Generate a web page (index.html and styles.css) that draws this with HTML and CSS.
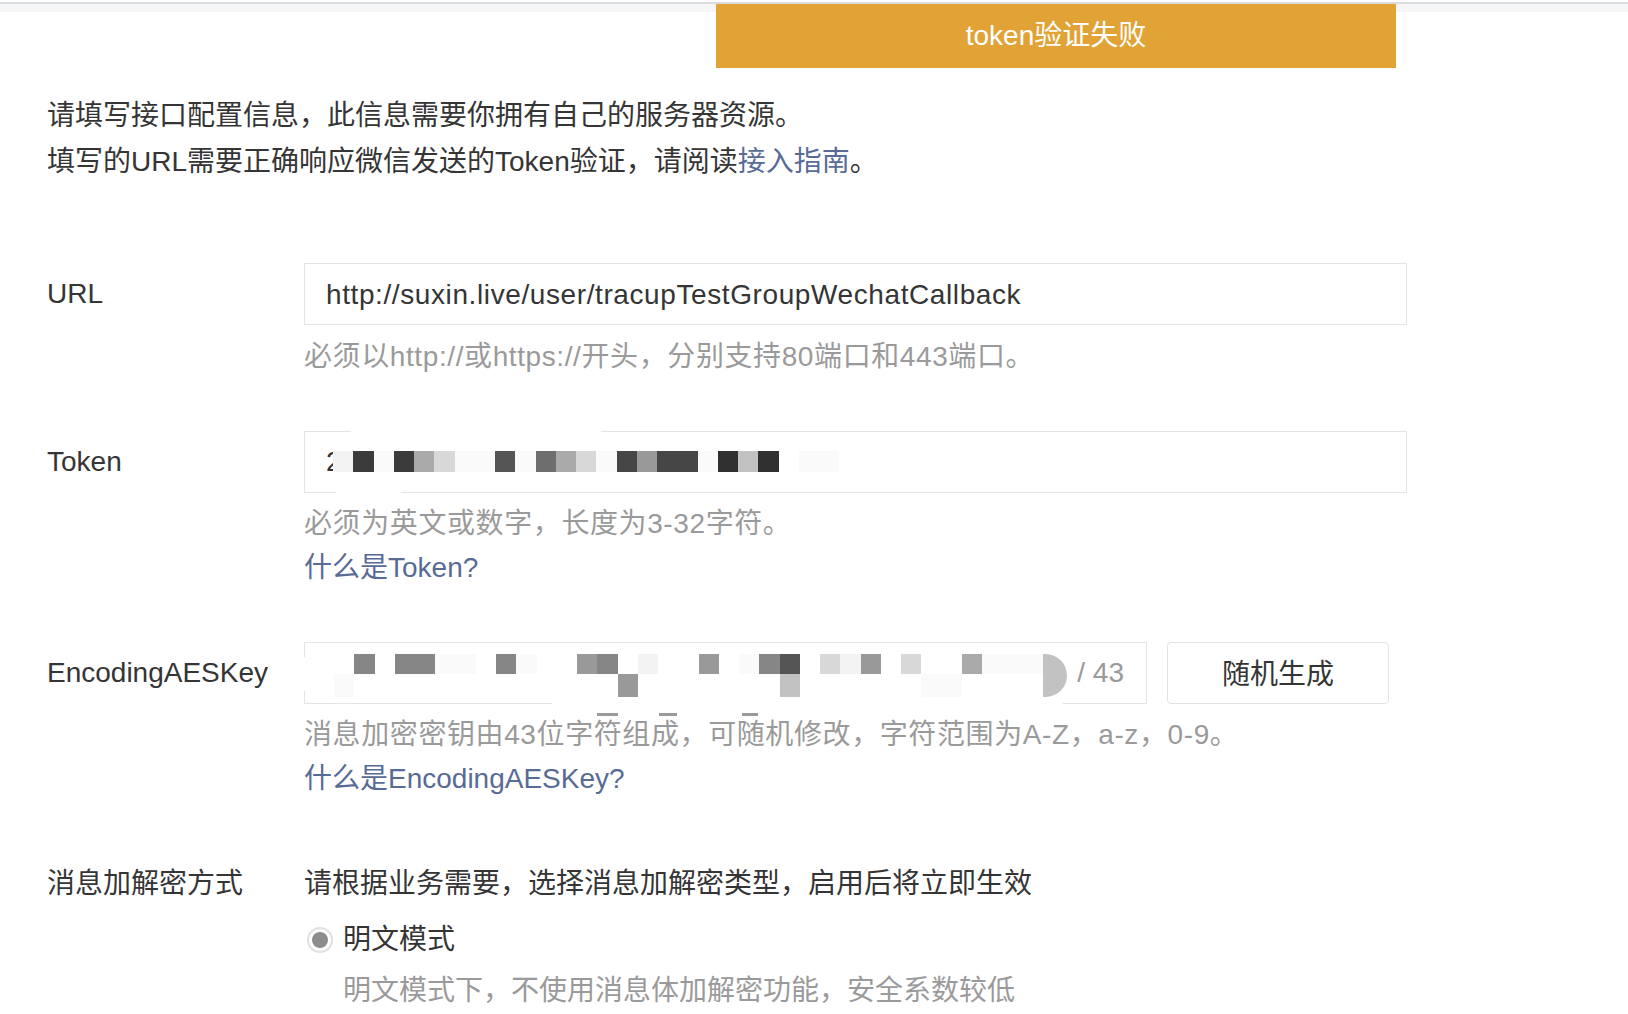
FILE: index.html
```html
<!DOCTYPE html>
<html lang="zh-CN">
<head>
    <meta charset="UTF-8">
    <meta name="viewport" content="width=device-width, initial-scale=1.0">
    <title>服务器配置</title>
    <link rel="stylesheet" href="styles.css">
</head>

<body>
    <div class="topbar"></div>
    <div class="toast">token验证失败</div>

    <div class="page">
        <div class="intro">
            <p>请填写接口配置信息，此信息需要你拥有自己的服务器资源。</p>
            <p>填写的URL需要正确响应微信发送的Token验证，请阅读<a href="#">接入指南</a>。</p>
        </div>

        <div class="field field-url">
            <label class="field-label">URL</label>
            <div class="field-body">
                <div class="input">
                    <span class="value">http://suxin.live/user/tracupTestGroupWechatCallback</span>
                </div>
                <p class="tips">必须以http://或https://开头，分别支持80端口和443端口。</p>
            </div>
        </div>

        <div class="field field-token">
            <label class="field-label">Token</label>
            <div class="field-body">
                <div class="input input-token">
                    <span class="cut">2</span>
                    <div class="mosaic-token">
                        <i class="k11"></i><i class="k2"></i><i class="k12"></i><i class="k2"></i><i class="k8"></i>
                        <i class="k10"></i><i class="k12"></i><i class="k12"></i><i class="k4"></i><i class="k12"></i>
                        <i class="k5"></i><i class="k8"></i><i class="k10"></i><i class="k12"></i><i class="k3"></i>
                        <i class="k7"></i><i class="k3"></i><i class="k3"></i><i class="k12"></i><i class="k1"></i>
                        <i class="k9"></i><i class="k1"></i><i></i><i class="k12"></i><i class="k12"></i>
                    </div>
                    <span class="smudge smudge-token-top"></span>
                    <span class="smudge smudge-token-bottom"></span>
                </div>
                <p class="tips">必须为英文或数字，长度为3-32字符。</p>
                <a class="help" href="#">什么是Token?</a>
            </div>
        </div>

        <div class="field field-aes">
            <label class="field-label">EncodingAESKey</label>
            <div class="field-body">
                <div class="input-row">
                    <div class="input input-aes">
                        <div class="mosaic-aes">
                            <i></i><i class="k6"></i><i></i><i class="k6"></i><i class="k6"></i><i class="k12"></i>
                            <i class="k12"></i><i></i><i class="k6"></i><i class="k12"></i><i></i><i></i>
                            <i class="k7"></i><i class="k6"></i><i></i><i class="k11"></i><i></i><i></i>
                            <i class="k7"></i><i></i><i class="k12"></i><i class="k6"></i><i class="k4"></i><i></i>
                            <i class="k10"></i><i class="k11"></i><i class="k7"></i><i></i><i class="k10"></i><i></i>
                            <i></i><i class="k8"></i><i class="k12"></i><i class="k12"></i><i class="k12"></i><i class="k9 edge"></i>

                            <i class="k12"></i><i></i><i></i><i></i><i></i><i></i>
                            <i></i><i></i><i></i><i></i><i></i><i></i>
                            <i></i><i></i><i class="k7"></i><i></i><i></i><i></i>
                            <i></i><i></i><i></i><i></i><i class="k9"></i><i></i>
                            <i></i><i></i><i></i><i></i><i></i><i class="k12"></i>
                            <i class="k12"></i><i></i><i></i><i></i><i></i>
                        </div>
                        <span class="counter">/ 43</span>
                        <span class="smudge smudge-aes"></span>
                        <span class="smudge smudge-aes-left"></span>
                        <span class="peek peek-1"></span>
                        <span class="peek peek-2"></span>
                        <span class="peek peek-3"></span>
                    </div>
                    <button class="btn">随机生成</button>
                </div>
                <p class="tips">消息加密密钥由43位字符组成，可随机修改，字符范围为A-Z，a-z，0-9。</p>
                <a class="help" href="#">什么是EncodingAESKey?</a>
            </div>
        </div>

        <div class="field field-mode">
            <label class="field-label">消息加解密方式</label>
            <div class="field-body">
                <p class="mode-intro">请根据业务需要，选择消息加解密类型，启用后将立即生效</p>
                <div class="radio">
                    <span class="radio-icon"></span>
                    <span>明文模式</span>
                </div>
                <p class="radio-desc">明文模式下，不使用消息体加解密功能，安全系数较低</p>
            </div>
        </div>
    </div>
</body>
</html>
```

FILE: styles.css
```css
body{
    margin: 0;
    font-family: "Liberation Sans", "Noto Sans CJK SC", sans-serif;
    font-size: 28px;
    color: #353535;
    background-color: #fff;
    overflow: hidden;
}
p{
    margin: 0;
}
a{
    color: #576b95;
    text-decoration: none;
}

/* top strip + toast */
.topbar{
    margin-top: 2px;
    height: 8px;
    border-top: 2px solid #dcdde0;
    background-color: #f5f6f8;
}
.toast{
    position: absolute;
    top: 4px;
    left: 716px;
    width: 680px;
    height: 64px;
    line-height: 64px;
    text-align: center;
    font-size: 28px;
    color: #fff;
    background-color: #e1a236;
}

.page{
    padding-left: 47px;
}
.intro{
    margin-top: 81px;
    line-height: 46px;
}

/* form rows */
.field{
    display: flex;
    margin-top: 52px;
}
.field-url{
    margin-top: 78px;
}
.field-mode{
    margin-top: 61px;
}
.field-label{
    width: 257px;
    flex-shrink: 0;
    line-height: 62px;
}
.field-mode .field-label{
    line-height: 44px;
}
.field-body{
    display: flex;
    flex-direction: column;
    align-items: flex-start;
}

.input{
    position: relative;
    box-sizing: border-box;
    width: 1103px;
    height: 62px;
    border: 1px solid #e4e4e7;
    display: flex;
    align-items: center;
    padding: 0 21px;
}
.value{
    line-height: 62px;
    padding-top: 2px;
    letter-spacing: 0.6px;
}
.tips{
    margin-top: 9px;
    line-height: 44px;
    padding-top: 1px;
    color: #9a9a9a;
    letter-spacing: 0.6px;
}
.field-token .tips,
.field-aes .tips{
    margin-top: 8px;
}
.help{
    line-height: 44px;
}

/* token mosaic */
.cut{
    width: 8px;
    overflow: hidden;
    display: flex;
    line-height: 30px;
    margin-right: -1px;
}
.mosaic-token{
    display: flex;
    margin-top: -2px;
}
.mosaic-token i{
    width: 20.25px;
    height: 21px;
}

/* aes */
.input-row{
    display: flex;
    gap: 20px;
}
.input-aes{
    width: 843px;
    align-items: flex-start;
    padding: 11px 22px 0 29px;
}
.mosaic-aes{
    display: grid;
    grid-template-columns: repeat(36, 20.25px);
    grid-template-rows: 20px 23px;
}
.mosaic-aes .edge{
    grid-row: span 2;
    width: 24px;
    border-radius: 0 22px 22px 0;
}
.counter{
    margin-left: auto;
    align-self: center;
    margin-top: -11px;
    color: #9a9a9a;
}
.btn{
    box-sizing: border-box;
    width: 222px;
    height: 62px;
    border: 1px solid #e0e3e7;
    border-radius: 4px;
    background-color: #fff;
    font-family: inherit;
    font-size: 28px;
    color: #353535;
    padding: 0 0 3px;
}

/* white smudges over the blurred values */
.smudge{
    position: absolute;
    background-color: #fff;
    border-radius: 12px;
}
.smudge-token-top{
    left: 46px;
    top: -4px;
    width: 250px;
    height: 8px;
}
.smudge-token-bottom{
    left: 31px;
    bottom: -4px;
    width: 65px;
    height: 8px;
}
.smudge-aes{
    left: 246px;
    top: 54px;
    width: 512px;
    height: 20px;
    border-radius: 0 0 20px 30px;
}
.smudge-aes-left{
    left: -4px;
    top: 14px;
    width: 10px;
    height: 34px;
    border-radius: 4px;
}
.peek{
    position: absolute;
    top: 70px;
    height: 3px;
    background-color: #9a9a9a;
}
.peek-1{
    left: 292px;
    width: 21px;
}
.peek-2{
    left: 354px;
    width: 18px;
}
.peek-3{
    left: 437px;
    width: 16px;
}

/* shades */
.k1{ background-color: #303030; }
.k2{ background-color: #3b3b3b; }
.k3{ background-color: #464646; }
.k4{ background-color: #555; }
.k5{ background-color: #6e6e6e; }
.k6{ background-color: #868686; }
.k7{ background-color: #999; }
.k8{ background-color: #aaa; }
.k9{ background-color: #c2c2c2; }
.k10{ background-color: #d8d8d8; }
.k11{ background-color: #f3f3f3; }
.k12{ background-color: #fafafa; }

/* mode */
.mode-intro{
    line-height: 44px;
}
.radio{
    display: flex;
    align-items: center;
    margin-top: 12px;
    line-height: 44px;
}
.radio-icon{
    box-sizing: border-box;
    width: 26px;
    height: 26px;
    margin-left: 3px;
    margin-right: 10px;
    border: 2px solid #e0e0e0;
    border-radius: 50%;
    display: flex;
    align-items: center;
    justify-content: center;
}
.radio-icon::after{
    content: "";
    width: 16px;
    height: 16px;
    border-radius: 50%;
    background-color: #8c8c8c;
}
.radio-desc{
    margin-top: 7px;
    padding-left: 39px;
    line-height: 44px;
    color: #9a9a9a;
}
```
